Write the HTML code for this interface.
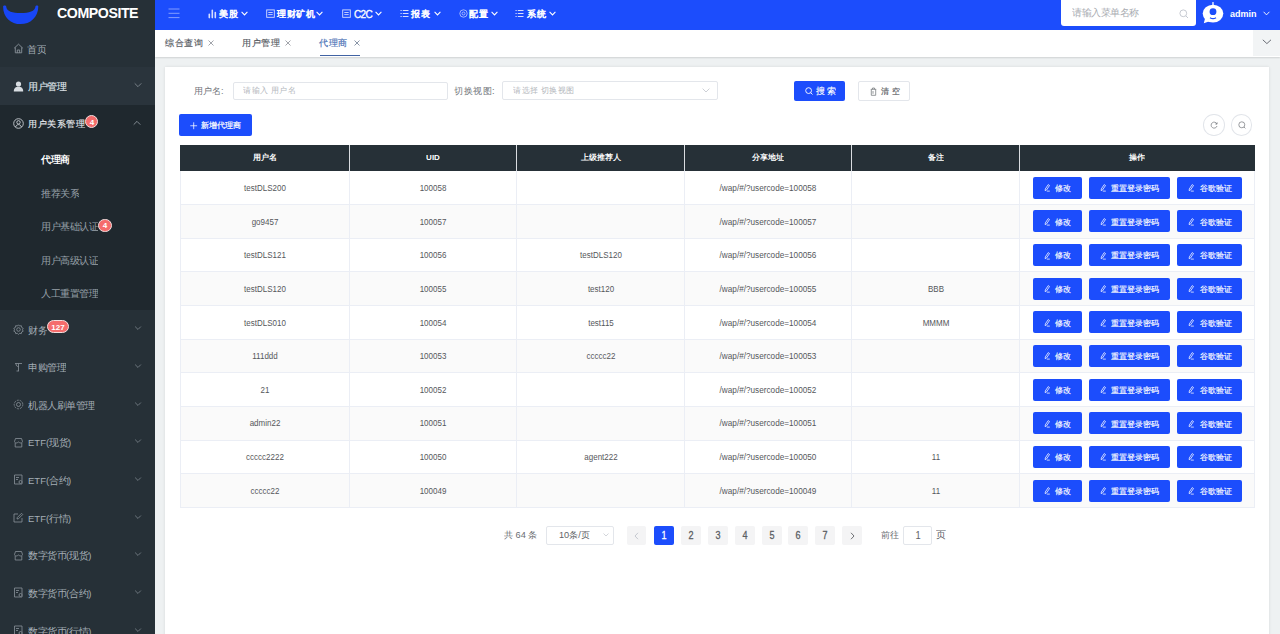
<!DOCTYPE html>
<html><head><meta charset="utf-8"><style>
html,body{margin:0;padding:0;width:1280px;height:634px;overflow:hidden;background:#f0f2f5}
body{position:relative;font-family:"Liberation Sans", sans-serif}
.t{position:absolute;white-space:nowrap;transform:scale(0.5);transform-origin:0 0}
.b{position:absolute}
.s{position:absolute;overflow:visible}
</style></head><body>
<div class="b" style="left:0px;top:0px;width:1280px;height:634px;background:#eef1f2"></div>
<div class="b" style="left:0px;top:0px;width:155px;height:634px;background:#263037"></div>
<svg class="s" style="left:0px;top:0px" width="42" height="30" viewBox="0 0 42 30"><path d="M3.1,6.4 C3.1,17.4 11,24.1 20.6,24.1 C30.2,24.1 38.3,17.2 38.3,6.2 C38.3,5.1 35.6,5.1 35.5,6.2 C35.2,11.6 29,12.9 20.8,12.9 C12.6,12.9 6.6,11.6 6.2,6.4 C6.1,5.2 3.1,5.2 3.1,6.4 Z" fill="#1846f6"/></svg>
<div class="t" style="left:56.5px;top:1.95px;height:42.60px;line-height:42.60px;font-size:28.40px;color:#ffffff;font-weight:700;letter-spacing:-0.9px">COMPOSITE</div>
<svg class="s" style="left:13px;top:43.25px" width="11" height="11" viewBox="0 0 11 11"><path d="M1.2,5.2 L5.5,1.2 L9.8,5.2 M2.3,4.4 V9.8 H8.7 V4.4 M4.3,9.8 V7 H6.7 V9.8" fill="none" stroke="#8a939b" stroke-width="0.9"/></svg>
<div class="t" style="left:26.5px;top:42.27px;height:29.10px;line-height:29.10px;font-size:19.40px;color:#a3abb3;font-weight:400;">首页</div>
<div class="b" style="left:0px;top:66.8px;width:155px;height:38px;background:#2a343c"></div>
<svg class="s" style="left:13px;top:80.75px" width="11" height="11" viewBox="0 0 11 11"><circle cx="5.5" cy="3" r="2.6" fill="#d8dde2"/><path d="M0.8,10.6 C0.8,7 2.8,5.8 5.5,5.8 C8.2,5.8 10.2,7 10.2,10.6 Z" fill="#d8dde2"/></svg>
<div class="t" style="left:27.5px;top:80.12px;height:28.50px;line-height:28.50px;font-size:19.00px;color:#dfe3e8;font-weight:400;-webkit-text-stroke:0.3px #dfe3e8">用户管理</div>
<svg class="s" style="left:132.9px;top:81.25px" width="10" height="8" viewBox="0 0 10 8"><path d="M1.7000000000000002,2.35 L5,5.65 L8.3,2.35" fill="none" stroke="#8a939b" stroke-width="0.8"/></svg>
<div class="b" style="left:0px;top:105px;width:155px;height:205px;background:#1f282e"></div>
<svg class="s" style="left:13px;top:118.25px" width="11" height="11" viewBox="0 0 11 11"><circle cx="5.5" cy="5.5" r="4.8" fill="none" stroke="#c8ced4" stroke-width="0.9"/><circle cx="5.5" cy="4.3" r="1.7" fill="none" stroke="#c8ced4" stroke-width="0.9"/><path d="M2.6,9 C3.2,7.3 4.2,6.6 5.5,6.6 C6.8,6.6 7.8,7.3 8.4,9" fill="none" stroke="#c8ced4" stroke-width="0.9"/></svg>
<div class="t" style="left:27.5px;top:117.18px;height:27.90px;line-height:27.90px;font-size:18.60px;color:#e6e9ed;font-weight:400;-webkit-text-stroke:0.3px #e6e9ed">用户关系管理</div>
<div class="b" style="left:85px;top:115.2px;width:13.2px;height:13.2px;background:#f56c6c;border-radius:6.6px;border:0.6px solid #f3dede;box-sizing:border-box"></div>
<div class="t" style="left:78.60px;width:26px;text-align:center;top:115.60px;height:24.00px;line-height:24.00px;font-size:16.00px;color:#fff;font-weight:700;transform:scale(0.5000,0.5);transform-origin:50% 0;">4</div>
<svg class="s" style="left:131.9px;top:118.85px" width="10" height="8" viewBox="0 0 10 8"><path d="M1.7000000000000002,5.65 L5,2.35 L8.3,5.65" fill="none" stroke="#9aa3ab" stroke-width="0.8"/></svg>
<div class="t" style="left:41px;top:153.32px;height:28.50px;line-height:28.50px;font-size:19.00px;color:#ffffff;font-weight:700;">代理商</div>
<div class="t" style="left:41px;top:186.82px;height:28.50px;line-height:28.50px;font-size:19.00px;color:#98a1a9;font-weight:400;">推荐关系</div>
<div class="t" style="left:41px;top:220.32px;height:28.50px;line-height:28.50px;font-size:19.00px;color:#98a1a9;font-weight:400;">用户基础认证</div>
<div class="b" style="left:97.8px;top:218.75px;width:14.2px;height:13.2px;background:#f56c6c;border-radius:6.6px;border:0.6px solid #f3dede;box-sizing:border-box"></div>
<div class="t" style="left:90.90px;width:28px;text-align:center;top:219.25px;height:24.00px;line-height:24.00px;font-size:16.00px;color:#fff;font-weight:700;transform:scale(0.5000,0.5);transform-origin:50% 0;">4</div>
<div class="t" style="left:41px;top:253.82px;height:28.50px;line-height:28.50px;font-size:19.00px;color:#98a1a9;font-weight:400;">用户高级认证</div>
<div class="t" style="left:41px;top:287.32px;height:28.50px;line-height:28.50px;font-size:19.00px;color:#98a1a9;font-weight:400;">人工重置管理</div>
<svg class="s" style="left:13px;top:323.825px" width="11" height="11" viewBox="0 0 11 11"><circle cx="5.5" cy="5.5" r="1.8" fill="none" stroke="#8a939b" stroke-width="0.8"/><path d="M5.5,0.8 L6.6,2 L8.3,1.7 L8.6,3.4 L10.2,4.3 L9.4,5.8 L10.2,7.2 L8.6,8 L8.3,9.6 L6.6,9.3 L5.5,10.4 L4.4,9.3 L2.7,9.6 L2.4,8 L0.8,7.2 L1.6,5.8 L0.8,4.3 L2.4,3.4 L2.7,1.7 L4.4,2 Z" fill="none" stroke="#8a939b" stroke-width="0.8"/></svg>
<div class="t" style="left:27.5px;top:323.50px;height:28.50px;line-height:28.50px;font-size:19.00px;color:#a4adb5;font-weight:400;">财务</div>
<svg class="s" style="left:132.5px;top:324.425px" width="10" height="8" viewBox="0 0 10 8"><path d="M2.1,2.55 L5,5.45 L7.9,2.55" fill="none" stroke="#7d868e" stroke-width="0.8"/></svg>
<svg class="s" style="left:13px;top:361.47499999999997px" width="11" height="11" viewBox="0 0 11 11"><path d="M2,2.5 H9 M5.5,2.5 V10 M3.5,10 H6 M3,2.5 C3,5 4,5.5 5.5,5.5" fill="none" stroke="#8a939b" stroke-width="0.8"/></svg>
<div class="t" style="left:27.5px;top:361.15px;height:28.50px;line-height:28.50px;font-size:19.00px;color:#a4adb5;font-weight:400;">申购管理</div>
<svg class="s" style="left:132.5px;top:362.075px" width="10" height="8" viewBox="0 0 10 8"><path d="M2.1,2.55 L5,5.45 L7.9,2.55" fill="none" stroke="#7d868e" stroke-width="0.8"/></svg>
<svg class="s" style="left:13px;top:399.125px" width="11" height="11" viewBox="0 0 11 11"><circle cx="5.5" cy="5.5" r="2" fill="none" stroke="#8a939b" stroke-width="0.8"/><circle cx="5.5" cy="5.5" r="4.3" fill="none" stroke="#8a939b" stroke-width="0.8" stroke-dasharray="2 1"/></svg>
<div class="t" style="left:27.5px;top:398.80px;height:28.50px;line-height:28.50px;font-size:19.00px;color:#a4adb5;font-weight:400;">机器人刷单管理</div>
<svg class="s" style="left:132.5px;top:399.725px" width="10" height="8" viewBox="0 0 10 8"><path d="M2.1,2.55 L5,5.45 L7.9,2.55" fill="none" stroke="#7d868e" stroke-width="0.8"/></svg>
<svg class="s" style="left:13px;top:436.775px" width="11" height="11" viewBox="0 0 11 11"><path d="M1.5,4.5 L2.5,1.5 H8.5 L9.5,4.5 C9.5,5.5 8.5,6 7.8,6 C7,6 6.2,5.5 5.5,5 C4.8,5.5 4,6 3.2,6 C2.5,6 1.5,5.5 1.5,4.5 Z M2.2,6 V10 H8.8 V6" fill="none" stroke="#8a939b" stroke-width="0.8"/></svg>
<div class="t" style="left:27.5px;top:436.45px;height:28.50px;line-height:28.50px;font-size:19.00px;color:#a4adb5;font-weight:400;">ETF(现货)</div>
<svg class="s" style="left:132.5px;top:437.375px" width="10" height="8" viewBox="0 0 10 8"><path d="M2.1,2.55 L5,5.45 L7.9,2.55" fill="none" stroke="#7d868e" stroke-width="0.8"/></svg>
<svg class="s" style="left:13px;top:474.425px" width="11" height="11" viewBox="0 0 11 11"><path d="M1.5,1 H9 V10 H1.5 Z M3,3.5 H6 M3,5.5 H5" fill="none" stroke="#8a939b" stroke-width="0.8"/><circle cx="7.5" cy="8" r="1.5" fill="#263037" stroke="#8a939b" stroke-width="0.8"/></svg>
<div class="t" style="left:27.5px;top:474.10px;height:28.50px;line-height:28.50px;font-size:19.00px;color:#a4adb5;font-weight:400;">ETF(合约)</div>
<svg class="s" style="left:132.5px;top:475.02500000000003px" width="10" height="8" viewBox="0 0 10 8"><path d="M2.1,2.55 L5,5.45 L7.9,2.55" fill="none" stroke="#7d868e" stroke-width="0.8"/></svg>
<svg class="s" style="left:13px;top:512.075px" width="11" height="11" viewBox="0 0 11 11"><path d="M9,6 V10 H1 V2 H5 M4,7 L4.3,5.5 L8.5,1.3 L9.7,2.5 L5.5,6.7 Z" fill="none" stroke="#8a939b" stroke-width="0.8"/></svg>
<div class="t" style="left:27.5px;top:511.75px;height:28.50px;line-height:28.50px;font-size:19.00px;color:#a4adb5;font-weight:400;">ETF(行情)</div>
<svg class="s" style="left:132.5px;top:512.6750000000001px" width="10" height="8" viewBox="0 0 10 8"><path d="M2.1,2.55 L5,5.45 L7.9,2.55" fill="none" stroke="#7d868e" stroke-width="0.8"/></svg>
<svg class="s" style="left:13px;top:549.725px" width="11" height="11" viewBox="0 0 11 11"><path d="M1.5,4.5 L2.5,1.5 H8.5 L9.5,4.5 C9.5,5.5 8.5,6 7.8,6 C7,6 6.2,5.5 5.5,5 C4.8,5.5 4,6 3.2,6 C2.5,6 1.5,5.5 1.5,4.5 Z M2.2,6 V10 H8.8 V6" fill="none" stroke="#8a939b" stroke-width="0.8"/></svg>
<div class="t" style="left:27.5px;top:549.40px;height:28.50px;line-height:28.50px;font-size:19.00px;color:#a4adb5;font-weight:400;">数字货币(现货)</div>
<svg class="s" style="left:132.5px;top:550.325px" width="10" height="8" viewBox="0 0 10 8"><path d="M2.1,2.55 L5,5.45 L7.9,2.55" fill="none" stroke="#7d868e" stroke-width="0.8"/></svg>
<svg class="s" style="left:13px;top:587.375px" width="11" height="11" viewBox="0 0 11 11"><path d="M1.5,1 H9 V10 H1.5 Z M3,3.5 H6 M3,5.5 H5" fill="none" stroke="#8a939b" stroke-width="0.8"/><circle cx="7.5" cy="8" r="1.5" fill="#263037" stroke="#8a939b" stroke-width="0.8"/></svg>
<div class="t" style="left:27.5px;top:587.05px;height:28.50px;line-height:28.50px;font-size:19.00px;color:#a4adb5;font-weight:400;">数字货币(合约)</div>
<svg class="s" style="left:132.5px;top:587.975px" width="10" height="8" viewBox="0 0 10 8"><path d="M2.1,2.55 L5,5.45 L7.9,2.55" fill="none" stroke="#7d868e" stroke-width="0.8"/></svg>
<svg class="s" style="left:13px;top:625.0250000000001px" width="11" height="11" viewBox="0 0 11 11"><path d="M1.5,1 H9 V10 H1.5 Z M3,3.5 H6 M3,5.5 H5" fill="none" stroke="#8a939b" stroke-width="0.8"/><circle cx="7.5" cy="8" r="1.5" fill="#263037" stroke="#8a939b" stroke-width="0.8"/></svg>
<div class="t" style="left:27.5px;top:624.70px;height:28.50px;line-height:28.50px;font-size:19.00px;color:#a4adb5;font-weight:400;">数字货币(行情)</div>
<svg class="s" style="left:132.5px;top:625.6250000000001px" width="10" height="8" viewBox="0 0 10 8"><path d="M2.1,2.55 L5,5.45 L7.9,2.55" fill="none" stroke="#7d868e" stroke-width="0.8"/></svg>
<div class="b" style="left:46.8px;top:320.2px;width:22.2px;height:13.3px;background:#f56c6c;border-radius:6.6px;border:0.6px solid #f3dede;box-sizing:border-box"></div>
<div class="t" style="left:34.90px;width:46px;text-align:center;top:320.60px;height:24.00px;line-height:24.00px;font-size:16.00px;color:#fff;font-weight:700;transform:scale(0.5000,0.5);transform-origin:50% 0;">127</div>
<div class="b" style="left:155px;top:0px;width:1125px;height:30px;background:#1c4dfc"></div>
<svg class="s" style="left:168px;top:8px" width="12" height="11" viewBox="0 0 12 11"><path d="M0.5,1 H11.5 M0.5,5.3 H11.5 M0.5,9.6 H11.5" stroke="#8fa6ff" stroke-width="0.9" fill="none"/></svg>
<svg class="s" style="left:207.7px;top:9px" width="9" height="9" viewBox="0 0 9 9"><path d="M1.3,8.6 V5.2 M4.3,8.6 V1.2 M7.3,8.6 V3.6" stroke="#d6defe" stroke-width="1.6" stroke-linecap="round" fill="none"/></svg>
<div class="t" style="left:219px;top:7.25px;height:28.20px;line-height:28.20px;font-size:18.80px;color:#ffffff;font-weight:400;-webkit-text-stroke:1.0px #fff">美股</div>
<svg class="s" style="left:241px;top:11.3px" width="7" height="5" viewBox="0 0 7 5"><path d="M0.6,0.8 L3.5,3.9 L6.4,0.8" stroke="#ffffff" stroke-width="1.05" fill="none"/></svg>
<svg class="s" style="left:265.5px;top:9px" width="9" height="9" viewBox="0 0 9 9"><rect x="0.7" y="0.9" width="7.6" height="7.4" fill="none" stroke="#d6defe" stroke-width="0.9"/><path d="M2.3,3.5 H6.7 M2.3,5.6 H6.7" stroke="#d6defe" stroke-width="0.9"/></svg>
<div class="t" style="left:277px;top:7.25px;height:28.20px;line-height:28.20px;font-size:18.80px;color:#ffffff;font-weight:400;-webkit-text-stroke:1.0px #fff">理财矿机</div>
<svg class="s" style="left:316px;top:11.3px" width="7" height="5" viewBox="0 0 7 5"><path d="M0.6,0.8 L3.5,3.9 L6.4,0.8" stroke="#ffffff" stroke-width="1.05" fill="none"/></svg>
<svg class="s" style="left:341.7px;top:9px" width="9" height="9" viewBox="0 0 9 9"><rect x="0.7" y="0.9" width="7.6" height="7.4" fill="none" stroke="#d6defe" stroke-width="0.9"/><path d="M2.3,3.5 H6.7 M2.3,5.6 H6.7" stroke="#d6defe" stroke-width="0.9"/></svg>
<div class="t" style="left:353.8px;top:6.70px;height:30.00px;line-height:30.00px;font-size:20.00px;color:#ffffff;font-weight:400;-webkit-text-stroke:0.6px #fff;letter-spacing:-1.4px">C2C</div>
<svg class="s" style="left:375px;top:11.3px" width="7" height="5" viewBox="0 0 7 5"><path d="M0.6,0.8 L3.5,3.9 L6.4,0.8" stroke="#ffffff" stroke-width="1.05" fill="none"/></svg>
<svg class="s" style="left:400px;top:9px" width="9" height="9" viewBox="0 0 9 9"><path d="M0.5,1.5 H1.7 M2.8,1.5 H8.5 M0.5,4.5 H1.7 M2.8,4.5 H8.5 M0.5,7.5 H1.7 M2.8,7.5 H8.5" stroke="#d6defe" stroke-width="1" fill="none"/></svg>
<div class="t" style="left:411px;top:7.25px;height:28.20px;line-height:28.20px;font-size:18.80px;color:#ffffff;font-weight:400;-webkit-text-stroke:1.0px #fff">报表</div>
<svg class="s" style="left:433.7px;top:11.3px" width="7" height="5" viewBox="0 0 7 5"><path d="M0.6,0.8 L3.5,3.9 L6.4,0.8" stroke="#ffffff" stroke-width="1.05" fill="none"/></svg>
<svg class="s" style="left:458.6px;top:9px" width="9" height="9" viewBox="0 0 9 9"><circle cx="4.5" cy="4.5" r="3.7" fill="none" stroke="#d6defe" stroke-width="0.7"/><circle cx="4.5" cy="4.5" r="1.5" fill="none" stroke="#d6defe" stroke-width="0.7"/></svg>
<div class="t" style="left:469px;top:7.25px;height:28.20px;line-height:28.20px;font-size:18.80px;color:#ffffff;font-weight:400;-webkit-text-stroke:1.0px #fff">配置</div>
<svg class="s" style="left:491px;top:11.3px" width="7" height="5" viewBox="0 0 7 5"><path d="M0.6,0.8 L3.5,3.9 L6.4,0.8" stroke="#ffffff" stroke-width="1.05" fill="none"/></svg>
<svg class="s" style="left:515.3px;top:9px" width="9" height="9" viewBox="0 0 9 9"><path d="M0.5,1.5 H1.7 M2.8,1.5 H8.5 M0.5,4.5 H1.7 M2.8,4.5 H8.5 M0.5,7.5 H1.7 M2.8,7.5 H8.5" stroke="#d6defe" stroke-width="1" fill="none"/></svg>
<div class="t" style="left:526.5px;top:7.25px;height:28.20px;line-height:28.20px;font-size:18.80px;color:#ffffff;font-weight:400;-webkit-text-stroke:1.0px #fff">系统</div>
<svg class="s" style="left:549px;top:11.3px" width="7" height="5" viewBox="0 0 7 5"><path d="M0.6,0.8 L3.5,3.9 L6.4,0.8" stroke="#ffffff" stroke-width="1.05" fill="none"/></svg>
<div class="b" style="left:1061px;top:-3px;width:134.6px;height:29px;background:#fff;border-radius:3px"></div>
<div class="t" style="left:1072.3px;top:6.40px;height:28.80px;line-height:28.80px;font-size:19.20px;color:#a9acb2;font-weight:400;">请输入菜单名称</div>
<svg class="s" style="left:1179px;top:8.5px" width="10" height="10" viewBox="0 0 10 10"><circle cx="4.3" cy="4.3" r="3.4" fill="none" stroke="#c0c4cc" stroke-width="0.9"/><path d="M6.8,6.8 L9,9" stroke="#c0c4cc" stroke-width="0.9"/></svg>
<svg class="s" style="left:1202px;top:2px" width="23" height="22" viewBox="0 0 23 22"><path d="M11,0.6 V4" stroke="#fff" stroke-width="1.3" stroke-linecap="round"/><ellipse cx="11" cy="11.6" rx="10.3" ry="8.9" fill="#fff"/><path d="M3,16.5 L1.8,21.3 L7.5,19.3" fill="#fff"/><circle cx="11" cy="9.7" r="3.4" fill="#1c4dfc"/><path d="M8,15.7 C9.8,16.9 12.2,16.9 14,15.7" stroke="#1c4dfc" stroke-width="1.3" fill="none"/></svg>
<div class="t" style="left:1229.8px;top:6.75px;height:27.00px;line-height:27.00px;font-size:18.00px;color:#fff;font-weight:700;">admin</div>
<svg class="s" style="left:1262.5px;top:11px" width="7" height="5" viewBox="0 0 7 5"><path d="M0.6,0.8 L3.5,3.9 L6.4,0.8" stroke="#fff" stroke-width="0.9" fill="none"/></svg>
<div class="b" style="left:155px;top:30px;width:1125px;height:26.5px;background:#fff;box-shadow:0 1px 1.5px rgba(0,0,0,0.13)"></div>
<div class="t" style="left:164.7px;top:36.45px;height:28.20px;line-height:28.20px;font-size:18.80px;color:#55595f;font-weight:400;-webkit-text-stroke:0.3px #55595f">综合查询</div>
<svg class="s" style="left:208px;top:40px" width="6" height="6" viewBox="0 0 6 6"><path d="M0.5,0.5 L5.5,5.5 M5.5,0.5 L0.5,5.5" stroke="#8a8e95" stroke-width="0.8"/></svg>
<div class="t" style="left:241.5px;top:36.45px;height:28.20px;line-height:28.20px;font-size:18.80px;color:#55595f;font-weight:400;-webkit-text-stroke:0.3px #55595f">用户管理</div>
<svg class="s" style="left:285.3px;top:40px" width="6" height="6" viewBox="0 0 6 6"><path d="M0.5,0.5 L5.5,5.5 M5.5,0.5 L0.5,5.5" stroke="#8a8e95" stroke-width="0.8"/></svg>
<div class="t" style="left:319.4px;top:36.45px;height:28.20px;line-height:28.20px;font-size:18.80px;color:#4a70b5;font-weight:400;-webkit-text-stroke:0.3px #4a70b5">代理商</div>
<svg class="s" style="left:353.5px;top:40px" width="6" height="6" viewBox="0 0 6 6"><path d="M0.5,0.5 L5.5,5.5 M5.5,0.5 L0.5,5.5" stroke="#6b7a90" stroke-width="0.8"/></svg>
<div class="b" style="left:319.7px;top:54.8px;width:40.7px;height:1.5px;background:#4163a3"></div>
<div class="b" style="left:1253.4px;top:30px;width:26.6px;height:26px;background:#f2f4f5"></div>
<svg class="s" style="left:1262px;top:39px" width="10" height="6" viewBox="0 0 10 6"><path d="M0.8,0.8 L4.9,4.6 L9,0.8" stroke="#5a5e66" stroke-width="0.9" fill="none"/></svg>
<div class="b" style="left:165px;top:67px;width:1104px;height:580px;background:#fff;box-shadow:0 0 3px rgba(0,0,0,0.10)"></div>
<div class="t" style="left:194px;top:84.25px;height:27.00px;line-height:27.00px;font-size:18.00px;color:#73767b;font-weight:400;">用户名:</div>
<div class="b" style="left:233px;top:81.5px;width:215px;height:18px;border:0.7px solid #e3e6eb;border-radius:2px;box-sizing:border-box;background:#fff"></div>
<div class="t" style="left:243.2px;top:84.28px;height:24.90px;line-height:24.90px;font-size:16.60px;color:#b4b7bd;font-weight:400;">请输入 用户名</div>
<div class="t" style="left:453.5px;top:84.03px;height:27.90px;line-height:27.90px;font-size:18.60px;color:#73767b;font-weight:400;">切换视图:</div>
<div class="b" style="left:502px;top:81.3px;width:215.7px;height:18.5px;border:0.7px solid #e3e6eb;border-radius:2px;box-sizing:border-box;background:#fff"></div>
<div class="t" style="left:512.6px;top:84.28px;height:24.90px;line-height:24.90px;font-size:16.60px;color:#b4b7bd;font-weight:400;">请选择 切换视图</div>
<svg class="s" style="left:702px;top:88px" width="8" height="5" viewBox="0 0 8 5"><path d="M0.6,0.6 L4,4 L7.4,0.6" stroke="#c0c4cc" stroke-width="0.8" fill="none"/></svg>
<div class="b" style="left:794.3px;top:81px;width:50.7px;height:20px;background:#1c4dfc;border-radius:2px"></div>
<svg class="s" style="left:805px;top:87px" width="8" height="8" viewBox="0 0 8 8"><circle cx="3.6" cy="3.6" r="2.9" fill="none" stroke="#fff" stroke-width="0.9"/><path d="M5.7,5.7 L7.5,7.5" stroke="#fff" stroke-width="0.9"/></svg>
<div class="t" style="left:816px;top:84.62px;height:25.50px;line-height:25.50px;font-size:17.00px;color:#fff;font-weight:400;-webkit-text-stroke:0.3px #fff">搜&nbsp;索</div>
<div class="b" style="left:858.3px;top:81px;width:51.6px;height:20px;background:#fff;border:0.7px solid #e3e6eb;border-radius:2px;box-sizing:border-box"></div>
<svg class="s" style="left:869.5px;top:86.5px" width="7" height="9" viewBox="0 0 7 9"><path d="M0.8,2.3 H6.2 M2.5,2.3 V1 H4.5 V2.3 M1.3,2.3 V8.3 H5.7 V2.3 M3,4 V6.8" fill="none" stroke="#7a7d82" stroke-width="0.8"/></svg>
<div class="t" style="left:880.5px;top:84.78px;height:24.90px;line-height:24.90px;font-size:16.60px;color:#55585d;font-weight:400;-webkit-text-stroke:0.3px #55585d">清&nbsp;空</div>
<div class="b" style="left:179.2px;top:114px;width:72.8px;height:22.2px;background:#1c4dfc;border-radius:2px"></div>
<svg class="s" style="left:190px;top:121.5px" width="8" height="8" viewBox="0 0 8 8"><path d="M3.7,0.3 V7.2 M0.3,3.75 H7.1" stroke="#fff" stroke-width="0.75"/></svg>
<div class="t" style="left:200.8px;top:119.15px;height:24.60px;line-height:24.60px;font-size:16.40px;color:#fff;font-weight:400;-webkit-text-stroke:0.4px #fff">新增代理商</div>
<div class="b" style="left:1203.3px;top:114.2px;width:21.4px;height:21.6px;border:0.6px solid #e2e5ea;border-radius:50%;box-sizing:border-box;background:#fff"></div>
<div class="b" style="left:1230.8px;top:114.2px;width:21.4px;height:21.6px;border:0.6px solid #e2e5ea;border-radius:50%;box-sizing:border-box;background:#fff"></div>
<svg class="s" style="left:1210px;top:121px" width="8" height="8" viewBox="0 0 8 8"><path d="M6.9,3 A3,3 0 1 0 7,5" fill="none" stroke="#707378" stroke-width="0.7"/><path d="M5.3,3 L7,3.2 L7.2,1.4" fill="none" stroke="#707378" stroke-width="0.7"/></svg>
<svg class="s" style="left:1237.5px;top:121px" width="8" height="8" viewBox="0 0 8 8"><circle cx="3.8" cy="3.8" r="3" fill="none" stroke="#707378" stroke-width="0.7"/><path d="M6,6 L7.4,7.4" stroke="#707378" stroke-width="0.7"/></svg>
<div class="b" style="left:179.5px;top:145px;width:1075.5px;height:26px;background:#263037"></div>
<div class="t" style="left:104.50px;width:320px;text-align:center;top:151.30px;height:24.00px;line-height:24.00px;font-size:16.00px;color:#fff;font-weight:700;transform:scale(0.5000,0.5);transform-origin:50% 0;">用户名</div>
<div class="t" style="left:273.00px;width:320px;text-align:center;top:151.30px;height:24.00px;line-height:24.00px;font-size:16.00px;color:#fff;font-weight:700;transform:scale(0.5000,0.5);transform-origin:50% 0;">UID</div>
<div class="b" style="left:349.0px;top:145px;width:1px;height:26px;background:#d9dce0"></div>
<div class="t" style="left:440.50px;width:320px;text-align:center;top:151.30px;height:24.00px;line-height:24.00px;font-size:16.00px;color:#fff;font-weight:700;transform:scale(0.5000,0.5);transform-origin:50% 0;">上级推荐人</div>
<div class="b" style="left:516.0px;top:145px;width:1px;height:26px;background:#d9dce0"></div>
<div class="t" style="left:608.00px;width:320px;text-align:center;top:151.30px;height:24.00px;line-height:24.00px;font-size:16.00px;color:#fff;font-weight:700;transform:scale(0.5000,0.5);transform-origin:50% 0;">分享地址</div>
<div class="b" style="left:684.0px;top:145px;width:1px;height:26px;background:#d9dce0"></div>
<div class="t" style="left:775.50px;width:320px;text-align:center;top:151.30px;height:24.00px;line-height:24.00px;font-size:16.00px;color:#fff;font-weight:700;transform:scale(0.5000,0.5);transform-origin:50% 0;">备注</div>
<div class="b" style="left:851.0px;top:145px;width:1px;height:26px;background:#d9dce0"></div>
<div class="t" style="left:977.25px;width:320px;text-align:center;top:151.30px;height:24.00px;line-height:24.00px;font-size:16.00px;color:#fff;font-weight:700;transform:scale(0.5000,0.5);transform-origin:50% 0;">操作</div>
<div class="b" style="left:1019.0px;top:145px;width:1px;height:26px;background:#d9dce0"></div>
<div class="b" style="left:179.5px;top:204.65px;width:1075.5px;height:33.65px;background:#fafafa"></div>
<div class="b" style="left:179.5px;top:271.95px;width:1075.5px;height:33.65px;background:#fafafa"></div>
<div class="b" style="left:179.5px;top:339.25px;width:1075.5px;height:33.65px;background:#fafafa"></div>
<div class="b" style="left:179.5px;top:406.55px;width:1075.5px;height:33.65px;background:#fafafa"></div>
<div class="b" style="left:179.5px;top:473.85px;width:1075.5px;height:33.65px;background:#fafafa"></div>
<div class="b" style="left:179.5px;top:204.05px;width:1075.5px;height:0.9px;background:#ebeef5"></div>
<div class="b" style="left:179.5px;top:237.7px;width:1075.5px;height:0.9px;background:#ebeef5"></div>
<div class="b" style="left:179.5px;top:271.35px;width:1075.5px;height:0.9px;background:#ebeef5"></div>
<div class="b" style="left:179.5px;top:305.0px;width:1075.5px;height:0.9px;background:#ebeef5"></div>
<div class="b" style="left:179.5px;top:338.65px;width:1075.5px;height:0.9px;background:#ebeef5"></div>
<div class="b" style="left:179.5px;top:372.3px;width:1075.5px;height:0.9px;background:#ebeef5"></div>
<div class="b" style="left:179.5px;top:405.95px;width:1075.5px;height:0.9px;background:#ebeef5"></div>
<div class="b" style="left:179.5px;top:439.6px;width:1075.5px;height:0.9px;background:#ebeef5"></div>
<div class="b" style="left:179.5px;top:473.25px;width:1075.5px;height:0.9px;background:#ebeef5"></div>
<div class="b" style="left:179.5px;top:506.9px;width:1075.5px;height:0.9px;background:#ebeef5"></div>
<div class="b" style="left:349.1px;top:171px;width:0.8px;height:336.5px;background:#ebeef5"></div>
<div class="b" style="left:516.1px;top:171px;width:0.8px;height:336.5px;background:#ebeef5"></div>
<div class="b" style="left:684.1px;top:171px;width:0.8px;height:336.5px;background:#ebeef5"></div>
<div class="b" style="left:851.1px;top:171px;width:0.8px;height:336.5px;background:#ebeef5"></div>
<div class="b" style="left:1019.1px;top:171px;width:0.8px;height:336.5px;background:#ebeef5"></div>
<div class="t" style="left:98.50px;width:332px;text-align:center;top:180.92px;height:27.60px;line-height:27.60px;font-size:18.40px;color:#55575b;font-weight:400;transform:scale(0.4348,0.5);transform-origin:50% 0;">testDLS200</div>
<div class="t" style="left:267.00px;width:332px;text-align:center;top:180.92px;height:27.60px;line-height:27.60px;font-size:18.40px;color:#55575b;font-weight:400;transform:scale(0.4348,0.5);transform-origin:50% 0;">100058</div>
<div class="t" style="left:602.00px;width:332px;text-align:center;top:180.92px;height:27.60px;line-height:27.60px;font-size:18.40px;color:#55575b;font-weight:400;transform:scale(0.4457,0.5);transform-origin:50% 0;">/wap/#/?usercode=100058</div>
<div class="b" style="left:1033.1px;top:176.82px;width:48.8px;height:22px;background:#1c4dfc;border-radius:2px"></div>
<svg class="s" style="left:1044.1px;top:184.22px" width="8" height="8" viewBox="0 0 8 8"><path d="M1.2,6.7 L1.3,5 L4.2,0.6 L5.5,1.5 L2.6,5.9 Z M2.8,7.1 H5.8" fill="none" stroke="#fff" stroke-width="0.75"/></svg>
<div class="t" style="left:1055.3px;top:182.12px;height:24.00px;line-height:24.00px;font-size:16.00px;color:#fff;font-weight:400;-webkit-text-stroke:0.3px #fff">修改</div>
<div class="b" style="left:1089px;top:176.82px;width:81px;height:22px;background:#1c4dfc;border-radius:2px"></div>
<svg class="s" style="left:1100.1px;top:184.22px" width="8" height="8" viewBox="0 0 8 8"><path d="M1.2,6.7 L1.3,5 L4.2,0.6 L5.5,1.5 L2.6,5.9 Z M2.8,7.1 H5.8" fill="none" stroke="#fff" stroke-width="0.75"/></svg>
<div class="t" style="left:1111.3px;top:182.12px;height:24.00px;line-height:24.00px;font-size:16.00px;color:#fff;font-weight:400;-webkit-text-stroke:0.3px #fff">重置登录密码</div>
<div class="b" style="left:1177.1px;top:176.82px;width:65.1px;height:22px;background:#1c4dfc;border-radius:2px"></div>
<svg class="s" style="left:1188.3999999999999px;top:184.22px" width="8" height="8" viewBox="0 0 8 8"><path d="M1.2,6.7 L1.3,5 L4.2,0.6 L5.5,1.5 L2.6,5.9 Z M2.8,7.1 H5.8" fill="none" stroke="#fff" stroke-width="0.75"/></svg>
<div class="t" style="left:1199.6px;top:182.12px;height:24.00px;line-height:24.00px;font-size:16.00px;color:#fff;font-weight:400;-webkit-text-stroke:0.3px #fff">谷歌验证</div>
<div class="t" style="left:98.50px;width:332px;text-align:center;top:214.57px;height:27.60px;line-height:27.60px;font-size:18.40px;color:#55575b;font-weight:400;transform:scale(0.4348,0.5);transform-origin:50% 0;">go9457</div>
<div class="t" style="left:267.00px;width:332px;text-align:center;top:214.57px;height:27.60px;line-height:27.60px;font-size:18.40px;color:#55575b;font-weight:400;transform:scale(0.4348,0.5);transform-origin:50% 0;">100057</div>
<div class="t" style="left:602.00px;width:332px;text-align:center;top:214.57px;height:27.60px;line-height:27.60px;font-size:18.40px;color:#55575b;font-weight:400;transform:scale(0.4457,0.5);transform-origin:50% 0;">/wap/#/?usercode=100057</div>
<div class="b" style="left:1033.1px;top:210.47px;width:48.8px;height:22px;background:#1c4dfc;border-radius:2px"></div>
<svg class="s" style="left:1044.1px;top:217.88px" width="8" height="8" viewBox="0 0 8 8"><path d="M1.2,6.7 L1.3,5 L4.2,0.6 L5.5,1.5 L2.6,5.9 Z M2.8,7.1 H5.8" fill="none" stroke="#fff" stroke-width="0.75"/></svg>
<div class="t" style="left:1055.3px;top:215.78px;height:24.00px;line-height:24.00px;font-size:16.00px;color:#fff;font-weight:400;-webkit-text-stroke:0.3px #fff">修改</div>
<div class="b" style="left:1089px;top:210.47px;width:81px;height:22px;background:#1c4dfc;border-radius:2px"></div>
<svg class="s" style="left:1100.1px;top:217.88px" width="8" height="8" viewBox="0 0 8 8"><path d="M1.2,6.7 L1.3,5 L4.2,0.6 L5.5,1.5 L2.6,5.9 Z M2.8,7.1 H5.8" fill="none" stroke="#fff" stroke-width="0.75"/></svg>
<div class="t" style="left:1111.3px;top:215.78px;height:24.00px;line-height:24.00px;font-size:16.00px;color:#fff;font-weight:400;-webkit-text-stroke:0.3px #fff">重置登录密码</div>
<div class="b" style="left:1177.1px;top:210.47px;width:65.1px;height:22px;background:#1c4dfc;border-radius:2px"></div>
<svg class="s" style="left:1188.3999999999999px;top:217.88px" width="8" height="8" viewBox="0 0 8 8"><path d="M1.2,6.7 L1.3,5 L4.2,0.6 L5.5,1.5 L2.6,5.9 Z M2.8,7.1 H5.8" fill="none" stroke="#fff" stroke-width="0.75"/></svg>
<div class="t" style="left:1199.6px;top:215.78px;height:24.00px;line-height:24.00px;font-size:16.00px;color:#fff;font-weight:400;-webkit-text-stroke:0.3px #fff">谷歌验证</div>
<div class="t" style="left:98.50px;width:332px;text-align:center;top:248.22px;height:27.60px;line-height:27.60px;font-size:18.40px;color:#55575b;font-weight:400;transform:scale(0.4348,0.5);transform-origin:50% 0;">testDLS121</div>
<div class="t" style="left:267.00px;width:332px;text-align:center;top:248.22px;height:27.60px;line-height:27.60px;font-size:18.40px;color:#55575b;font-weight:400;transform:scale(0.4348,0.5);transform-origin:50% 0;">100056</div>
<div class="t" style="left:434.50px;width:332px;text-align:center;top:248.22px;height:27.60px;line-height:27.60px;font-size:18.40px;color:#55575b;font-weight:400;transform:scale(0.4348,0.5);transform-origin:50% 0;">testDLS120</div>
<div class="t" style="left:602.00px;width:332px;text-align:center;top:248.22px;height:27.60px;line-height:27.60px;font-size:18.40px;color:#55575b;font-weight:400;transform:scale(0.4457,0.5);transform-origin:50% 0;">/wap/#/?usercode=100056</div>
<div class="b" style="left:1033.1px;top:244.12px;width:48.8px;height:22px;background:#1c4dfc;border-radius:2px"></div>
<svg class="s" style="left:1044.1px;top:251.53px" width="8" height="8" viewBox="0 0 8 8"><path d="M1.2,6.7 L1.3,5 L4.2,0.6 L5.5,1.5 L2.6,5.9 Z M2.8,7.1 H5.8" fill="none" stroke="#fff" stroke-width="0.75"/></svg>
<div class="t" style="left:1055.3px;top:249.43px;height:24.00px;line-height:24.00px;font-size:16.00px;color:#fff;font-weight:400;-webkit-text-stroke:0.3px #fff">修改</div>
<div class="b" style="left:1089px;top:244.12px;width:81px;height:22px;background:#1c4dfc;border-radius:2px"></div>
<svg class="s" style="left:1100.1px;top:251.53px" width="8" height="8" viewBox="0 0 8 8"><path d="M1.2,6.7 L1.3,5 L4.2,0.6 L5.5,1.5 L2.6,5.9 Z M2.8,7.1 H5.8" fill="none" stroke="#fff" stroke-width="0.75"/></svg>
<div class="t" style="left:1111.3px;top:249.43px;height:24.00px;line-height:24.00px;font-size:16.00px;color:#fff;font-weight:400;-webkit-text-stroke:0.3px #fff">重置登录密码</div>
<div class="b" style="left:1177.1px;top:244.12px;width:65.1px;height:22px;background:#1c4dfc;border-radius:2px"></div>
<svg class="s" style="left:1188.3999999999999px;top:251.53px" width="8" height="8" viewBox="0 0 8 8"><path d="M1.2,6.7 L1.3,5 L4.2,0.6 L5.5,1.5 L2.6,5.9 Z M2.8,7.1 H5.8" fill="none" stroke="#fff" stroke-width="0.75"/></svg>
<div class="t" style="left:1199.6px;top:249.43px;height:24.00px;line-height:24.00px;font-size:16.00px;color:#fff;font-weight:400;-webkit-text-stroke:0.3px #fff">谷歌验证</div>
<div class="t" style="left:98.50px;width:332px;text-align:center;top:281.88px;height:27.60px;line-height:27.60px;font-size:18.40px;color:#55575b;font-weight:400;transform:scale(0.4348,0.5);transform-origin:50% 0;">testDLS120</div>
<div class="t" style="left:267.00px;width:332px;text-align:center;top:281.88px;height:27.60px;line-height:27.60px;font-size:18.40px;color:#55575b;font-weight:400;transform:scale(0.4348,0.5);transform-origin:50% 0;">100055</div>
<div class="t" style="left:434.50px;width:332px;text-align:center;top:281.88px;height:27.60px;line-height:27.60px;font-size:18.40px;color:#55575b;font-weight:400;transform:scale(0.4348,0.5);transform-origin:50% 0;">test120</div>
<div class="t" style="left:602.00px;width:332px;text-align:center;top:281.88px;height:27.60px;line-height:27.60px;font-size:18.40px;color:#55575b;font-weight:400;transform:scale(0.4457,0.5);transform-origin:50% 0;">/wap/#/?usercode=100055</div>
<div class="t" style="left:769.50px;width:332px;text-align:center;top:281.88px;height:27.60px;line-height:27.60px;font-size:18.40px;color:#55575b;font-weight:400;transform:scale(0.4348,0.5);transform-origin:50% 0;">BBB</div>
<div class="b" style="left:1033.1px;top:277.77px;width:48.8px;height:22px;background:#1c4dfc;border-radius:2px"></div>
<svg class="s" style="left:1044.1px;top:285.17px" width="8" height="8" viewBox="0 0 8 8"><path d="M1.2,6.7 L1.3,5 L4.2,0.6 L5.5,1.5 L2.6,5.9 Z M2.8,7.1 H5.8" fill="none" stroke="#fff" stroke-width="0.75"/></svg>
<div class="t" style="left:1055.3px;top:283.07px;height:24.00px;line-height:24.00px;font-size:16.00px;color:#fff;font-weight:400;-webkit-text-stroke:0.3px #fff">修改</div>
<div class="b" style="left:1089px;top:277.77px;width:81px;height:22px;background:#1c4dfc;border-radius:2px"></div>
<svg class="s" style="left:1100.1px;top:285.17px" width="8" height="8" viewBox="0 0 8 8"><path d="M1.2,6.7 L1.3,5 L4.2,0.6 L5.5,1.5 L2.6,5.9 Z M2.8,7.1 H5.8" fill="none" stroke="#fff" stroke-width="0.75"/></svg>
<div class="t" style="left:1111.3px;top:283.07px;height:24.00px;line-height:24.00px;font-size:16.00px;color:#fff;font-weight:400;-webkit-text-stroke:0.3px #fff">重置登录密码</div>
<div class="b" style="left:1177.1px;top:277.77px;width:65.1px;height:22px;background:#1c4dfc;border-radius:2px"></div>
<svg class="s" style="left:1188.3999999999999px;top:285.17px" width="8" height="8" viewBox="0 0 8 8"><path d="M1.2,6.7 L1.3,5 L4.2,0.6 L5.5,1.5 L2.6,5.9 Z M2.8,7.1 H5.8" fill="none" stroke="#fff" stroke-width="0.75"/></svg>
<div class="t" style="left:1199.6px;top:283.07px;height:24.00px;line-height:24.00px;font-size:16.00px;color:#fff;font-weight:400;-webkit-text-stroke:0.3px #fff">谷歌验证</div>
<div class="t" style="left:98.50px;width:332px;text-align:center;top:315.53px;height:27.60px;line-height:27.60px;font-size:18.40px;color:#55575b;font-weight:400;transform:scale(0.4348,0.5);transform-origin:50% 0;">testDLS010</div>
<div class="t" style="left:267.00px;width:332px;text-align:center;top:315.53px;height:27.60px;line-height:27.60px;font-size:18.40px;color:#55575b;font-weight:400;transform:scale(0.4348,0.5);transform-origin:50% 0;">100054</div>
<div class="t" style="left:434.50px;width:332px;text-align:center;top:315.53px;height:27.60px;line-height:27.60px;font-size:18.40px;color:#55575b;font-weight:400;transform:scale(0.4348,0.5);transform-origin:50% 0;">test115</div>
<div class="t" style="left:602.00px;width:332px;text-align:center;top:315.53px;height:27.60px;line-height:27.60px;font-size:18.40px;color:#55575b;font-weight:400;transform:scale(0.4457,0.5);transform-origin:50% 0;">/wap/#/?usercode=100054</div>
<div class="t" style="left:769.50px;width:332px;text-align:center;top:315.53px;height:27.60px;line-height:27.60px;font-size:18.40px;color:#55575b;font-weight:400;transform:scale(0.4348,0.5);transform-origin:50% 0;">MMMM</div>
<div class="b" style="left:1033.1px;top:311.43px;width:48.8px;height:22px;background:#1c4dfc;border-radius:2px"></div>
<svg class="s" style="left:1044.1px;top:318.82px" width="8" height="8" viewBox="0 0 8 8"><path d="M1.2,6.7 L1.3,5 L4.2,0.6 L5.5,1.5 L2.6,5.9 Z M2.8,7.1 H5.8" fill="none" stroke="#fff" stroke-width="0.75"/></svg>
<div class="t" style="left:1055.3px;top:316.73px;height:24.00px;line-height:24.00px;font-size:16.00px;color:#fff;font-weight:400;-webkit-text-stroke:0.3px #fff">修改</div>
<div class="b" style="left:1089px;top:311.43px;width:81px;height:22px;background:#1c4dfc;border-radius:2px"></div>
<svg class="s" style="left:1100.1px;top:318.82px" width="8" height="8" viewBox="0 0 8 8"><path d="M1.2,6.7 L1.3,5 L4.2,0.6 L5.5,1.5 L2.6,5.9 Z M2.8,7.1 H5.8" fill="none" stroke="#fff" stroke-width="0.75"/></svg>
<div class="t" style="left:1111.3px;top:316.73px;height:24.00px;line-height:24.00px;font-size:16.00px;color:#fff;font-weight:400;-webkit-text-stroke:0.3px #fff">重置登录密码</div>
<div class="b" style="left:1177.1px;top:311.43px;width:65.1px;height:22px;background:#1c4dfc;border-radius:2px"></div>
<svg class="s" style="left:1188.3999999999999px;top:318.82px" width="8" height="8" viewBox="0 0 8 8"><path d="M1.2,6.7 L1.3,5 L4.2,0.6 L5.5,1.5 L2.6,5.9 Z M2.8,7.1 H5.8" fill="none" stroke="#fff" stroke-width="0.75"/></svg>
<div class="t" style="left:1199.6px;top:316.73px;height:24.00px;line-height:24.00px;font-size:16.00px;color:#fff;font-weight:400;-webkit-text-stroke:0.3px #fff">谷歌验证</div>
<div class="t" style="left:98.50px;width:332px;text-align:center;top:349.18px;height:27.60px;line-height:27.60px;font-size:18.40px;color:#55575b;font-weight:400;transform:scale(0.4348,0.5);transform-origin:50% 0;">111ddd</div>
<div class="t" style="left:267.00px;width:332px;text-align:center;top:349.18px;height:27.60px;line-height:27.60px;font-size:18.40px;color:#55575b;font-weight:400;transform:scale(0.4348,0.5);transform-origin:50% 0;">100053</div>
<div class="t" style="left:434.50px;width:332px;text-align:center;top:349.18px;height:27.60px;line-height:27.60px;font-size:18.40px;color:#55575b;font-weight:400;transform:scale(0.4348,0.5);transform-origin:50% 0;">ccccc22</div>
<div class="t" style="left:602.00px;width:332px;text-align:center;top:349.18px;height:27.60px;line-height:27.60px;font-size:18.40px;color:#55575b;font-weight:400;transform:scale(0.4457,0.5);transform-origin:50% 0;">/wap/#/?usercode=100053</div>
<div class="b" style="left:1033.1px;top:345.07px;width:48.8px;height:22px;background:#1c4dfc;border-radius:2px"></div>
<svg class="s" style="left:1044.1px;top:352.47px" width="8" height="8" viewBox="0 0 8 8"><path d="M1.2,6.7 L1.3,5 L4.2,0.6 L5.5,1.5 L2.6,5.9 Z M2.8,7.1 H5.8" fill="none" stroke="#fff" stroke-width="0.75"/></svg>
<div class="t" style="left:1055.3px;top:350.38px;height:24.00px;line-height:24.00px;font-size:16.00px;color:#fff;font-weight:400;-webkit-text-stroke:0.3px #fff">修改</div>
<div class="b" style="left:1089px;top:345.07px;width:81px;height:22px;background:#1c4dfc;border-radius:2px"></div>
<svg class="s" style="left:1100.1px;top:352.47px" width="8" height="8" viewBox="0 0 8 8"><path d="M1.2,6.7 L1.3,5 L4.2,0.6 L5.5,1.5 L2.6,5.9 Z M2.8,7.1 H5.8" fill="none" stroke="#fff" stroke-width="0.75"/></svg>
<div class="t" style="left:1111.3px;top:350.38px;height:24.00px;line-height:24.00px;font-size:16.00px;color:#fff;font-weight:400;-webkit-text-stroke:0.3px #fff">重置登录密码</div>
<div class="b" style="left:1177.1px;top:345.07px;width:65.1px;height:22px;background:#1c4dfc;border-radius:2px"></div>
<svg class="s" style="left:1188.3999999999999px;top:352.47px" width="8" height="8" viewBox="0 0 8 8"><path d="M1.2,6.7 L1.3,5 L4.2,0.6 L5.5,1.5 L2.6,5.9 Z M2.8,7.1 H5.8" fill="none" stroke="#fff" stroke-width="0.75"/></svg>
<div class="t" style="left:1199.6px;top:350.38px;height:24.00px;line-height:24.00px;font-size:16.00px;color:#fff;font-weight:400;-webkit-text-stroke:0.3px #fff">谷歌验证</div>
<div class="t" style="left:98.50px;width:332px;text-align:center;top:382.82px;height:27.60px;line-height:27.60px;font-size:18.40px;color:#55575b;font-weight:400;transform:scale(0.4348,0.5);transform-origin:50% 0;">21</div>
<div class="t" style="left:267.00px;width:332px;text-align:center;top:382.82px;height:27.60px;line-height:27.60px;font-size:18.40px;color:#55575b;font-weight:400;transform:scale(0.4348,0.5);transform-origin:50% 0;">100052</div>
<div class="t" style="left:602.00px;width:332px;text-align:center;top:382.82px;height:27.60px;line-height:27.60px;font-size:18.40px;color:#55575b;font-weight:400;transform:scale(0.4457,0.5);transform-origin:50% 0;">/wap/#/?usercode=100052</div>
<div class="b" style="left:1033.1px;top:378.72px;width:48.8px;height:22px;background:#1c4dfc;border-radius:2px"></div>
<svg class="s" style="left:1044.1px;top:386.12px" width="8" height="8" viewBox="0 0 8 8"><path d="M1.2,6.7 L1.3,5 L4.2,0.6 L5.5,1.5 L2.6,5.9 Z M2.8,7.1 H5.8" fill="none" stroke="#fff" stroke-width="0.75"/></svg>
<div class="t" style="left:1055.3px;top:384.02px;height:24.00px;line-height:24.00px;font-size:16.00px;color:#fff;font-weight:400;-webkit-text-stroke:0.3px #fff">修改</div>
<div class="b" style="left:1089px;top:378.72px;width:81px;height:22px;background:#1c4dfc;border-radius:2px"></div>
<svg class="s" style="left:1100.1px;top:386.12px" width="8" height="8" viewBox="0 0 8 8"><path d="M1.2,6.7 L1.3,5 L4.2,0.6 L5.5,1.5 L2.6,5.9 Z M2.8,7.1 H5.8" fill="none" stroke="#fff" stroke-width="0.75"/></svg>
<div class="t" style="left:1111.3px;top:384.02px;height:24.00px;line-height:24.00px;font-size:16.00px;color:#fff;font-weight:400;-webkit-text-stroke:0.3px #fff">重置登录密码</div>
<div class="b" style="left:1177.1px;top:378.72px;width:65.1px;height:22px;background:#1c4dfc;border-radius:2px"></div>
<svg class="s" style="left:1188.3999999999999px;top:386.12px" width="8" height="8" viewBox="0 0 8 8"><path d="M1.2,6.7 L1.3,5 L4.2,0.6 L5.5,1.5 L2.6,5.9 Z M2.8,7.1 H5.8" fill="none" stroke="#fff" stroke-width="0.75"/></svg>
<div class="t" style="left:1199.6px;top:384.02px;height:24.00px;line-height:24.00px;font-size:16.00px;color:#fff;font-weight:400;-webkit-text-stroke:0.3px #fff">谷歌验证</div>
<div class="t" style="left:98.50px;width:332px;text-align:center;top:416.47px;height:27.60px;line-height:27.60px;font-size:18.40px;color:#55575b;font-weight:400;transform:scale(0.4348,0.5);transform-origin:50% 0;">admin22</div>
<div class="t" style="left:267.00px;width:332px;text-align:center;top:416.47px;height:27.60px;line-height:27.60px;font-size:18.40px;color:#55575b;font-weight:400;transform:scale(0.4348,0.5);transform-origin:50% 0;">100051</div>
<div class="t" style="left:602.00px;width:332px;text-align:center;top:416.47px;height:27.60px;line-height:27.60px;font-size:18.40px;color:#55575b;font-weight:400;transform:scale(0.4457,0.5);transform-origin:50% 0;">/wap/#/?usercode=100051</div>
<div class="b" style="left:1033.1px;top:412.37px;width:48.8px;height:22px;background:#1c4dfc;border-radius:2px"></div>
<svg class="s" style="left:1044.1px;top:419.77px" width="8" height="8" viewBox="0 0 8 8"><path d="M1.2,6.7 L1.3,5 L4.2,0.6 L5.5,1.5 L2.6,5.9 Z M2.8,7.1 H5.8" fill="none" stroke="#fff" stroke-width="0.75"/></svg>
<div class="t" style="left:1055.3px;top:417.67px;height:24.00px;line-height:24.00px;font-size:16.00px;color:#fff;font-weight:400;-webkit-text-stroke:0.3px #fff">修改</div>
<div class="b" style="left:1089px;top:412.37px;width:81px;height:22px;background:#1c4dfc;border-radius:2px"></div>
<svg class="s" style="left:1100.1px;top:419.77px" width="8" height="8" viewBox="0 0 8 8"><path d="M1.2,6.7 L1.3,5 L4.2,0.6 L5.5,1.5 L2.6,5.9 Z M2.8,7.1 H5.8" fill="none" stroke="#fff" stroke-width="0.75"/></svg>
<div class="t" style="left:1111.3px;top:417.67px;height:24.00px;line-height:24.00px;font-size:16.00px;color:#fff;font-weight:400;-webkit-text-stroke:0.3px #fff">重置登录密码</div>
<div class="b" style="left:1177.1px;top:412.37px;width:65.1px;height:22px;background:#1c4dfc;border-radius:2px"></div>
<svg class="s" style="left:1188.3999999999999px;top:419.77px" width="8" height="8" viewBox="0 0 8 8"><path d="M1.2,6.7 L1.3,5 L4.2,0.6 L5.5,1.5 L2.6,5.9 Z M2.8,7.1 H5.8" fill="none" stroke="#fff" stroke-width="0.75"/></svg>
<div class="t" style="left:1199.6px;top:417.67px;height:24.00px;line-height:24.00px;font-size:16.00px;color:#fff;font-weight:400;-webkit-text-stroke:0.3px #fff">谷歌验证</div>
<div class="t" style="left:98.50px;width:332px;text-align:center;top:450.12px;height:27.60px;line-height:27.60px;font-size:18.40px;color:#55575b;font-weight:400;transform:scale(0.4348,0.5);transform-origin:50% 0;">ccccc2222</div>
<div class="t" style="left:267.00px;width:332px;text-align:center;top:450.12px;height:27.60px;line-height:27.60px;font-size:18.40px;color:#55575b;font-weight:400;transform:scale(0.4348,0.5);transform-origin:50% 0;">100050</div>
<div class="t" style="left:434.50px;width:332px;text-align:center;top:450.12px;height:27.60px;line-height:27.60px;font-size:18.40px;color:#55575b;font-weight:400;transform:scale(0.4348,0.5);transform-origin:50% 0;">agent222</div>
<div class="t" style="left:602.00px;width:332px;text-align:center;top:450.12px;height:27.60px;line-height:27.60px;font-size:18.40px;color:#55575b;font-weight:400;transform:scale(0.4457,0.5);transform-origin:50% 0;">/wap/#/?usercode=100050</div>
<div class="t" style="left:769.50px;width:332px;text-align:center;top:450.12px;height:27.60px;line-height:27.60px;font-size:18.40px;color:#55575b;font-weight:400;transform:scale(0.4348,0.5);transform-origin:50% 0;">11</div>
<div class="b" style="left:1033.1px;top:446.02px;width:48.8px;height:22px;background:#1c4dfc;border-radius:2px"></div>
<svg class="s" style="left:1044.1px;top:453.42px" width="8" height="8" viewBox="0 0 8 8"><path d="M1.2,6.7 L1.3,5 L4.2,0.6 L5.5,1.5 L2.6,5.9 Z M2.8,7.1 H5.8" fill="none" stroke="#fff" stroke-width="0.75"/></svg>
<div class="t" style="left:1055.3px;top:451.32px;height:24.00px;line-height:24.00px;font-size:16.00px;color:#fff;font-weight:400;-webkit-text-stroke:0.3px #fff">修改</div>
<div class="b" style="left:1089px;top:446.02px;width:81px;height:22px;background:#1c4dfc;border-radius:2px"></div>
<svg class="s" style="left:1100.1px;top:453.42px" width="8" height="8" viewBox="0 0 8 8"><path d="M1.2,6.7 L1.3,5 L4.2,0.6 L5.5,1.5 L2.6,5.9 Z M2.8,7.1 H5.8" fill="none" stroke="#fff" stroke-width="0.75"/></svg>
<div class="t" style="left:1111.3px;top:451.32px;height:24.00px;line-height:24.00px;font-size:16.00px;color:#fff;font-weight:400;-webkit-text-stroke:0.3px #fff">重置登录密码</div>
<div class="b" style="left:1177.1px;top:446.02px;width:65.1px;height:22px;background:#1c4dfc;border-radius:2px"></div>
<svg class="s" style="left:1188.3999999999999px;top:453.42px" width="8" height="8" viewBox="0 0 8 8"><path d="M1.2,6.7 L1.3,5 L4.2,0.6 L5.5,1.5 L2.6,5.9 Z M2.8,7.1 H5.8" fill="none" stroke="#fff" stroke-width="0.75"/></svg>
<div class="t" style="left:1199.6px;top:451.32px;height:24.00px;line-height:24.00px;font-size:16.00px;color:#fff;font-weight:400;-webkit-text-stroke:0.3px #fff">谷歌验证</div>
<div class="t" style="left:98.50px;width:332px;text-align:center;top:483.77px;height:27.60px;line-height:27.60px;font-size:18.40px;color:#55575b;font-weight:400;transform:scale(0.4348,0.5);transform-origin:50% 0;">ccccc22</div>
<div class="t" style="left:267.00px;width:332px;text-align:center;top:483.77px;height:27.60px;line-height:27.60px;font-size:18.40px;color:#55575b;font-weight:400;transform:scale(0.4348,0.5);transform-origin:50% 0;">100049</div>
<div class="t" style="left:602.00px;width:332px;text-align:center;top:483.77px;height:27.60px;line-height:27.60px;font-size:18.40px;color:#55575b;font-weight:400;transform:scale(0.4457,0.5);transform-origin:50% 0;">/wap/#/?usercode=100049</div>
<div class="t" style="left:769.50px;width:332px;text-align:center;top:483.77px;height:27.60px;line-height:27.60px;font-size:18.40px;color:#55575b;font-weight:400;transform:scale(0.4348,0.5);transform-origin:50% 0;">11</div>
<div class="b" style="left:1033.1px;top:479.67px;width:48.8px;height:22px;background:#1c4dfc;border-radius:2px"></div>
<svg class="s" style="left:1044.1px;top:487.07px" width="8" height="8" viewBox="0 0 8 8"><path d="M1.2,6.7 L1.3,5 L4.2,0.6 L5.5,1.5 L2.6,5.9 Z M2.8,7.1 H5.8" fill="none" stroke="#fff" stroke-width="0.75"/></svg>
<div class="t" style="left:1055.3px;top:484.97px;height:24.00px;line-height:24.00px;font-size:16.00px;color:#fff;font-weight:400;-webkit-text-stroke:0.3px #fff">修改</div>
<div class="b" style="left:1089px;top:479.67px;width:81px;height:22px;background:#1c4dfc;border-radius:2px"></div>
<svg class="s" style="left:1100.1px;top:487.07px" width="8" height="8" viewBox="0 0 8 8"><path d="M1.2,6.7 L1.3,5 L4.2,0.6 L5.5,1.5 L2.6,5.9 Z M2.8,7.1 H5.8" fill="none" stroke="#fff" stroke-width="0.75"/></svg>
<div class="t" style="left:1111.3px;top:484.97px;height:24.00px;line-height:24.00px;font-size:16.00px;color:#fff;font-weight:400;-webkit-text-stroke:0.3px #fff">重置登录密码</div>
<div class="b" style="left:1177.1px;top:479.67px;width:65.1px;height:22px;background:#1c4dfc;border-radius:2px"></div>
<svg class="s" style="left:1188.3999999999999px;top:487.07px" width="8" height="8" viewBox="0 0 8 8"><path d="M1.2,6.7 L1.3,5 L4.2,0.6 L5.5,1.5 L2.6,5.9 Z M2.8,7.1 H5.8" fill="none" stroke="#fff" stroke-width="0.75"/></svg>
<div class="t" style="left:1199.6px;top:484.97px;height:24.00px;line-height:24.00px;font-size:16.00px;color:#fff;font-weight:400;-webkit-text-stroke:0.3px #fff">谷歌验证</div>
<div class="b" style="left:179.5px;top:171px;width:0.8px;height:336.5px;background:#ebeef5"></div>
<div class="b" style="left:1254.2px;top:171px;width:0.8px;height:336.5px;background:#ebeef5"></div>
<div class="t" style="left:504px;top:528.40px;height:27.60px;line-height:27.60px;font-size:18.40px;color:#6a6d72;font-weight:400;">共 64 条</div>
<div class="b" style="left:546px;top:526.2px;width:67.5px;height:18.4px;border:0.7px solid #e3e6eb;border-radius:2px;box-sizing:border-box;background:#fff"></div>
<div class="t" style="left:558.5px;top:528.40px;height:27.60px;line-height:27.60px;font-size:18.40px;color:#606266;font-weight:400;">10条/页</div>
<svg class="s" style="left:602.5px;top:533px" width="6" height="4" viewBox="0 0 6 4"><path d="M0.5,0.5 L3,3 L5.5,0.5" stroke="#c0c4cc" stroke-width="0.7" fill="none"/></svg>
<div class="b" style="left:627.2px;top:526px;width:19.3px;height:18.6px;background:#f4f4f5;border-radius:2px"></div>
<svg class="s" style="left:634px;top:531.5px" width="5" height="8" viewBox="0 0 5 8"><path d="M4,0.8 L1,4 L4,7.2" stroke="#c0c4cc" stroke-width="0.9" fill="none"/></svg>
<div class="b" style="left:654px;top:526px;width:20px;height:18.6px;background:#1c4dfc;border-radius:2px"></div>
<div class="t" style="left:644.00px;width:40px;text-align:center;top:526.85px;height:33.00px;line-height:33.00px;font-size:22.00px;color:#fff;font-weight:400;transform:scale(0.4100,0.5);transform-origin:50% 0;-webkit-text-stroke:0.6px #fff">1</div>
<div class="b" style="left:681px;top:526px;width:20px;height:18.6px;background:#f4f4f5;border-radius:2px"></div>
<div class="t" style="left:671.00px;width:40px;text-align:center;top:526.85px;height:33.00px;line-height:33.00px;font-size:22.00px;color:#5a5d62;font-weight:400;transform:scale(0.4100,0.5);transform-origin:50% 0;-webkit-text-stroke:0.6px #5a5d62">2</div>
<div class="b" style="left:708px;top:526px;width:20px;height:18.6px;background:#f4f4f5;border-radius:2px"></div>
<div class="t" style="left:698.00px;width:40px;text-align:center;top:526.85px;height:33.00px;line-height:33.00px;font-size:22.00px;color:#5a5d62;font-weight:400;transform:scale(0.4100,0.5);transform-origin:50% 0;-webkit-text-stroke:0.6px #5a5d62">3</div>
<div class="b" style="left:735px;top:526px;width:20px;height:18.6px;background:#f4f4f5;border-radius:2px"></div>
<div class="t" style="left:725.00px;width:40px;text-align:center;top:526.85px;height:33.00px;line-height:33.00px;font-size:22.00px;color:#5a5d62;font-weight:400;transform:scale(0.4100,0.5);transform-origin:50% 0;-webkit-text-stroke:0.6px #5a5d62">4</div>
<div class="b" style="left:761.6px;top:526px;width:20px;height:18.6px;background:#f4f4f5;border-radius:2px"></div>
<div class="t" style="left:751.60px;width:40px;text-align:center;top:526.85px;height:33.00px;line-height:33.00px;font-size:22.00px;color:#5a5d62;font-weight:400;transform:scale(0.4100,0.5);transform-origin:50% 0;-webkit-text-stroke:0.6px #5a5d62">5</div>
<div class="b" style="left:788.4px;top:526px;width:20px;height:18.6px;background:#f4f4f5;border-radius:2px"></div>
<div class="t" style="left:778.40px;width:40px;text-align:center;top:526.85px;height:33.00px;line-height:33.00px;font-size:22.00px;color:#5a5d62;font-weight:400;transform:scale(0.4100,0.5);transform-origin:50% 0;-webkit-text-stroke:0.6px #5a5d62">6</div>
<div class="b" style="left:815.25px;top:526px;width:20px;height:18.6px;background:#f4f4f5;border-radius:2px"></div>
<div class="t" style="left:805.25px;width:40px;text-align:center;top:526.85px;height:33.00px;line-height:33.00px;font-size:22.00px;color:#5a5d62;font-weight:400;transform:scale(0.4100,0.5);transform-origin:50% 0;-webkit-text-stroke:0.6px #5a5d62">7</div>
<div class="b" style="left:842px;top:526px;width:19.6px;height:18.6px;background:#f4f4f5;border-radius:2px"></div>
<svg class="s" style="left:849.5px;top:531.5px" width="5" height="8" viewBox="0 0 5 8"><path d="M1,0.8 L4,4 L1,7.2" stroke="#606266" stroke-width="0.9" fill="none"/></svg>
<div class="t" style="left:880.8px;top:528.40px;height:27.60px;line-height:27.60px;font-size:18.40px;color:#6a6d72;font-weight:400;">前往</div>
<div class="b" style="left:902.8px;top:526.2px;width:29.6px;height:18.4px;border:0.7px solid #e3e6eb;border-radius:2px;box-sizing:border-box;background:#fff"></div>
<div class="t" style="left:889.60px;width:56px;text-align:center;top:526.85px;height:33.00px;line-height:33.00px;font-size:22.00px;color:#606266;font-weight:400;transform:scale(0.4250,0.5);transform-origin:50% 0;">1</div>
<div class="t" style="left:935.6px;top:528.17px;height:28.50px;line-height:28.50px;font-size:19.00px;color:#606266;font-weight:400;">页</div>
</body></html>
